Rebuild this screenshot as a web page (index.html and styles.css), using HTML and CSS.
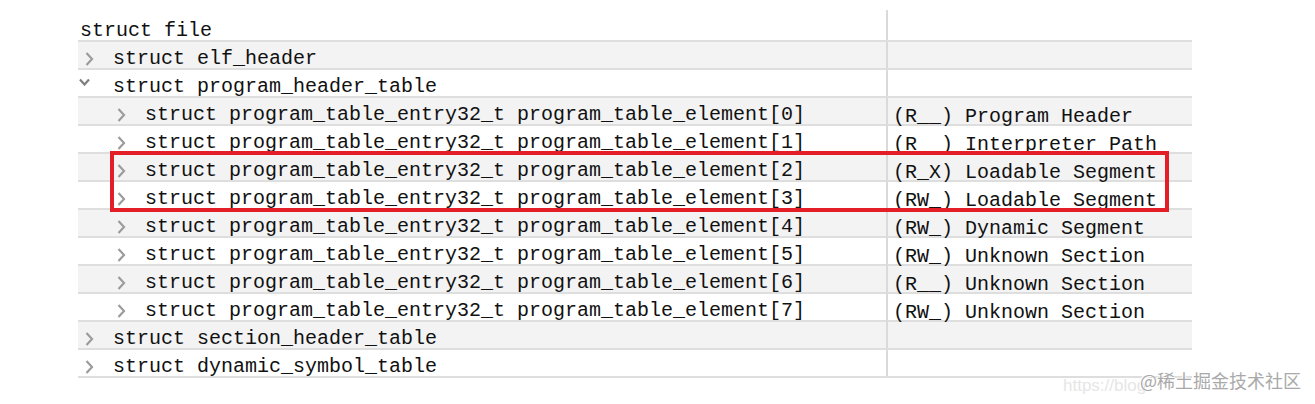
FILE: index.html
```html
<!DOCTYPE html>
<html>
<head>
<meta charset="utf-8">
<link rel="stylesheet" href="styles.css">
</head>
<body>
<div class="page">
  <div class="tree">
    <div class="row root">
      <div class="name lv0"><span class="label">struct file</span></div>
      <div class="val"></div>
    </div>
    <div class="row alt">
      <div class="name lv1"><span class="twisty"><svg width="9" height="14" viewBox="0 0 9 14"><polyline points="1.5,1 7,7 1.5,13"/></svg></span><span class="label">struct elf_header</span></div>
      <div class="val"></div>
    </div>
    <div class="row">
      <div class="name lv1"><span class="twisty open"><svg width="11" height="8" viewBox="0 0 11 8"><polyline points="1,1.5 5.5,6.5 10,1.5"/></svg></span><span class="label">struct program_header_table</span></div>
      <div class="val"></div>
    </div>
    <div class="row alt">
      <div class="name lv2"><span class="twisty"><svg width="9" height="14" viewBox="0 0 9 14"><polyline points="1.5,1 7,7 1.5,13"/></svg></span><span class="label">struct program_table_entry32_t program_table_element[0]</span></div>
      <div class="val"><span class="label">(R__) Program Header</span></div>
    </div>
    <div class="row">
      <div class="name lv2"><span class="twisty"><svg width="9" height="14" viewBox="0 0 9 14"><polyline points="1.5,1 7,7 1.5,13"/></svg></span><span class="label">struct program_table_entry32_t program_table_element[1]</span></div>
      <div class="val"><span class="label">(R__) Interpreter Path</span></div>
    </div>
    <div class="row alt">
      <div class="name lv2"><span class="twisty"><svg width="9" height="14" viewBox="0 0 9 14"><polyline points="1.5,1 7,7 1.5,13"/></svg></span><span class="label">struct program_table_entry32_t program_table_element[2]</span></div>
      <div class="val"><span class="label">(R_X) Loadable Segment</span></div>
    </div>
    <div class="row">
      <div class="name lv2"><span class="twisty"><svg width="9" height="14" viewBox="0 0 9 14"><polyline points="1.5,1 7,7 1.5,13"/></svg></span><span class="label">struct program_table_entry32_t program_table_element[3]</span></div>
      <div class="val"><span class="label">(RW_) Loadable Segment</span></div>
    </div>
    <div class="row alt">
      <div class="name lv2"><span class="twisty"><svg width="9" height="14" viewBox="0 0 9 14"><polyline points="1.5,1 7,7 1.5,13"/></svg></span><span class="label">struct program_table_entry32_t program_table_element[4]</span></div>
      <div class="val"><span class="label">(RW_) Dynamic Segment</span></div>
    </div>
    <div class="row">
      <div class="name lv2"><span class="twisty"><svg width="9" height="14" viewBox="0 0 9 14"><polyline points="1.5,1 7,7 1.5,13"/></svg></span><span class="label">struct program_table_entry32_t program_table_element[5]</span></div>
      <div class="val"><span class="label">(RW_) Unknown Section</span></div>
    </div>
    <div class="row alt">
      <div class="name lv2"><span class="twisty"><svg width="9" height="14" viewBox="0 0 9 14"><polyline points="1.5,1 7,7 1.5,13"/></svg></span><span class="label">struct program_table_entry32_t program_table_element[6]</span></div>
      <div class="val"><span class="label">(R__) Unknown Section</span></div>
    </div>
    <div class="row">
      <div class="name lv2"><span class="twisty"><svg width="9" height="14" viewBox="0 0 9 14"><polyline points="1.5,1 7,7 1.5,13"/></svg></span><span class="label">struct program_table_entry32_t program_table_element[7]</span></div>
      <div class="val"><span class="label">(RW_) Unknown Section</span></div>
    </div>
    <div class="row alt">
      <div class="name lv1"><span class="twisty"><svg width="9" height="14" viewBox="0 0 9 14"><polyline points="1.5,1 7,7 1.5,13"/></svg></span><span class="label">struct section_header_table</span></div>
      <div class="val"></div>
    </div>
    <div class="row">
      <div class="name lv1"><span class="twisty"><svg width="9" height="14" viewBox="0 0 9 14"><polyline points="1.5,1 7,7 1.5,13"/></svg></span><span class="label">struct dynamic_symbol_table</span></div>
      <div class="val"></div>
    </div>
    <div class="highlight"></div>
  </div>
  <div class="watermark">
    <span class="wm-url">https://blog</span>
    <span class="wm-brand">@稀土掘金技术社区</span>
  </div>
</div>
</body>
</html>
```

FILE: styles.css
```css
html, body {
  margin: 0;
  padding: 0;
  background: #ffffff;
}

.page {
  position: relative;
  width: 1315px;
  height: 404px;
  overflow: hidden;
  padding-top: 10px;
  padding-left: 78px;
  box-sizing: border-box;
}

.tree {
  position: relative;
  width: 1114px;
  font-family: "Liberation Mono", "DejaVu Sans Mono", monospace;
  font-size: 20px;
  color: #111111;
}

.row {
  display: grid;
  grid-template-columns: 808px 306px;
  height: 28px;
  box-sizing: border-box;
  border-bottom: 2px solid #dedede;
}

.row.alt {
  background: #f3f3f3;
}

.row.root {
  height: 32px;
}

.name {
  display: flex;
  align-items: flex-start;
  padding-top: 7px;
  white-space: nowrap;
}

.root .name,
.root .val {
  padding-top: 11px;
}

.val {
  border-left: 2px solid #dadada;
  padding-left: 5px;
  padding-top: 7px;
  white-space: nowrap;
}

.label {
  line-height: 19px;
}

.lv0 { padding-left: 2px; }
.lv1 { padding-left: 7px; }
.lv2 { padding-left: 39px; }

.twisty {
  flex: none;
  width: 28px;
}

.twisty svg {
  display: block;
  margin-top: 3px;
  fill: none;
  stroke: #9c9c9c;
  stroke-width: 2.2;
}

.twisty.open svg {
  margin-left: -6px;
  margin-top: 1px;
  stroke: #7e7e7e;
}

.highlight {
  position: absolute;
  left: 32px;
  top: 141px;
  width: 1059px;
  height: 61px;
  box-sizing: border-box;
  border: 4px solid #e41e26;
}

.watermark {
  position: absolute;
  left: 1063px;
  top: 368px;
  width: 250px;
  height: 30px;
}

.wm-url {
  position: absolute;
  left: 0;
  top: 8px;
  font-family: "Liberation Sans", Arial, sans-serif;
  font-size: 17px;
  color: #e6e6e6;
  white-space: nowrap;
}

.wm-brand {
  position: absolute;
  left: 77px;
  top: 0;
  font-family: "Noto Sans CJK SC", "Noto Sans", sans-serif;
  font-size: 18px;
  line-height: 24px;
  color: #a9a9a9;
  white-space: nowrap;
  text-shadow: 1px 1px 0 #ffffff, -1px -1px 0 #ffffff;
}
```
